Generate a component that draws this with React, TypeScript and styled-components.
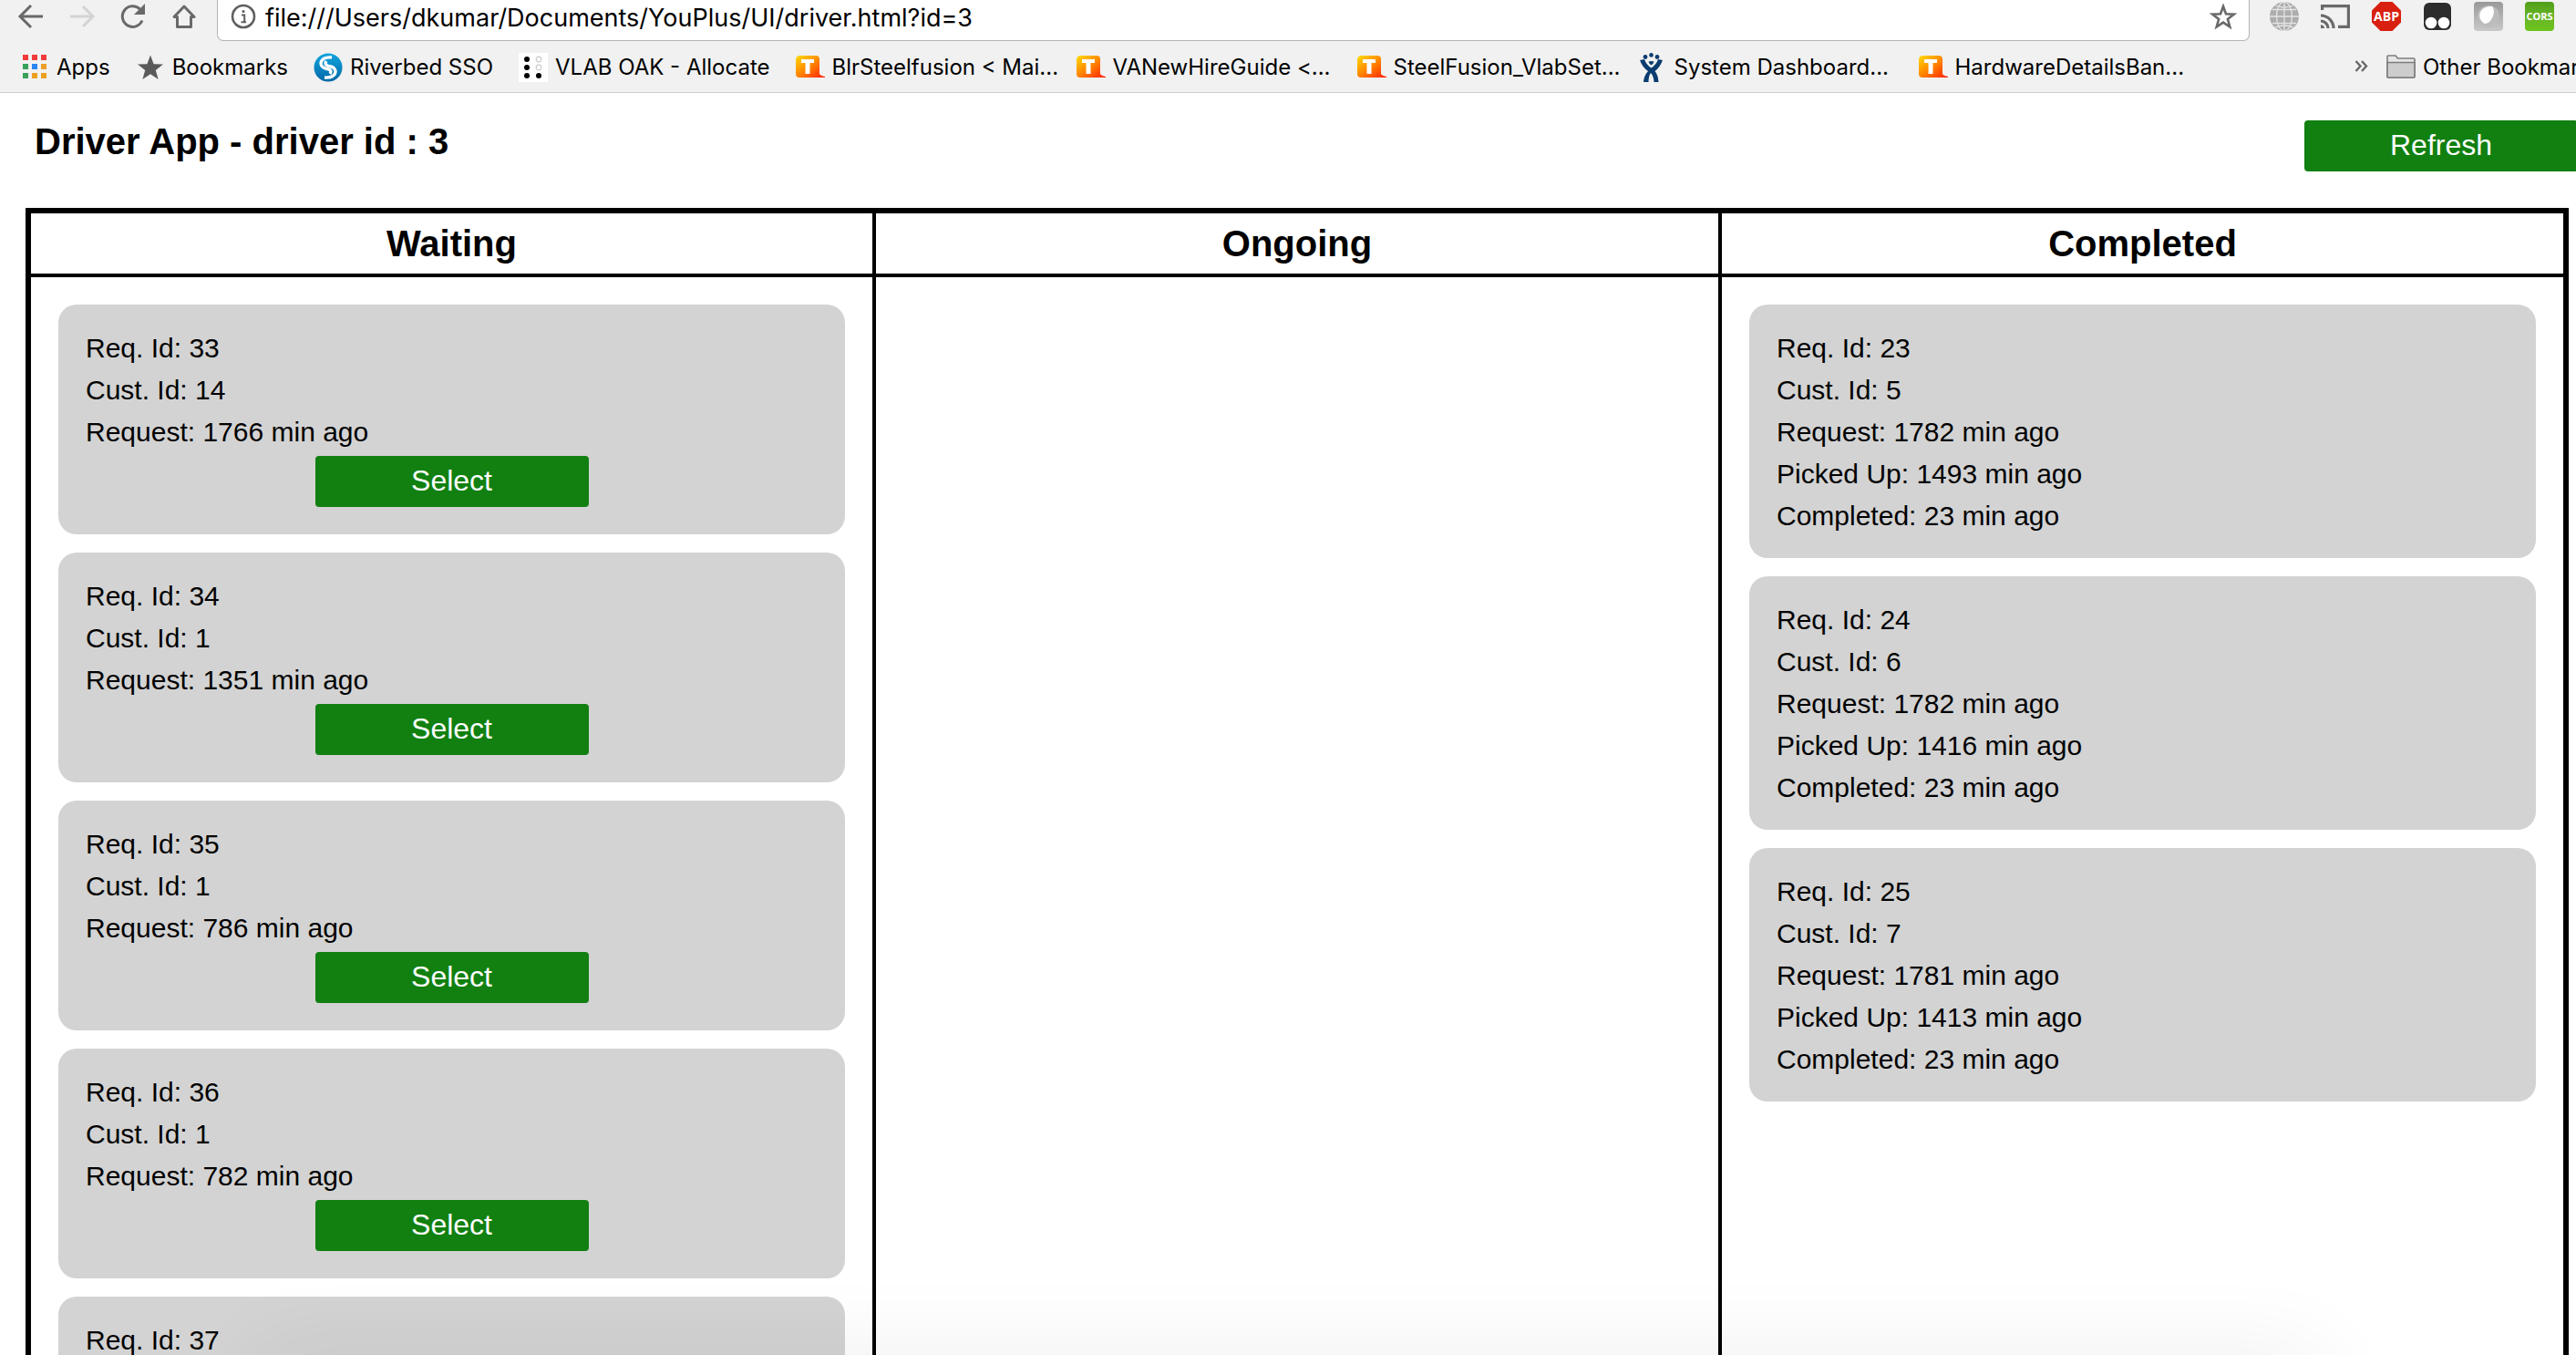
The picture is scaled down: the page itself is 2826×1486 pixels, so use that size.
import React from 'react';
import styled, { createGlobalStyle, css } from 'styled-components';

const GlobalStyle = createGlobalStyle`
  *, *::before, *::after { box-sizing: border-box; }
  body { margin: 0; background: #fff; color: #000; }
`;

const uiFont = "Inter, Roboto, sans-serif";
const pageFont = "'Liberation Sans', Arial, sans-serif";

const Window = styled.div`
  display: flex;
  flex-direction: column;
  height: 100vh;
  overflow: hidden;
`;

/* ---------- browser chrome ---------- */

const Chrome = styled.header`
  flex: none;
  background: #f1f1f1;
  border-bottom: 1px solid #cfcfcf;
  font-family: ${uiFont};
`;

const Toolbar = styled.div`
  display: flex;
  align-items: flex-start;
  height: 45px;
  padding: 0 24px 0 18px;
`;

const NavGroup = styled.nav`
  display: flex;
  align-items: center;
  gap: 24px;
  height: 36px;
  margin-right: 20px;
`;

const IconButton = styled.button`
  display: block;
  flex: none;
  width: 32px;
  height: 32px;
  padding: 0;
  border: 0;
  background: none;
`;

const AddressBar = styled.div`
  display: flex;
  flex: 1;
  align-items: center;
  height: 45px;
  padding: 0 12px 8px;
  background: #fff;
  border: 1px solid #b4b4b4;
  border-top: 0;
  border-radius: 0 0 7px 7px;
`;

const AddressInput = styled.input`
  flex: 1;
  min-width: 0;
  height: 36px;
  padding: 2px 8px 0;
  border: 0;
  outline: 0;
  background: none;
  color: #000;
  font: 27px/34px ${uiFont};
`;

const Extensions = styled.div`
  display: flex;
  align-items: center;
  gap: 24px;
  height: 36px;
  margin-left: 22px;
`;

const BookmarksBar = styled.nav`
  display: flex;
  align-items: center;
  gap: 28px;
  height: 56px;
  padding: 2px 0 0 22px;
  overflow: hidden;
`;

const Bookmark = styled.a<{ $clipped?: boolean }>`
  display: flex;
  flex: none;
  align-items: center;
  gap: 8px;
  color: #000;
  font-size: 24px;
  line-height: 32px;
  white-space: nowrap;
  text-decoration: none;
  ${p => p.$clipped && css`width: 280px;`}
`;

const Overflow = styled.div`
  display: flex;
  flex: none;
  align-items: center;
  gap: 12px;
  width: 252px;
  margin-left: auto;
`;

const Svg = styled.svg`
  display: block;
  flex: none;
  width: 32px;
  height: 32px;
`;

/* ---------- driver page ---------- */

const Page = styled.main`
  flex: 1;
  min-height: 0;
  padding-top: 30px;
  overflow: hidden;
  font-family: ${pageFont};
`;

const PageHeader = styled.div`
  display: flex;
  align-items: flex-start;
  justify-content: space-between;
  margin: 0 -2px 40px 38px;
`;

const Title = styled.h1`
  margin: 0;
  font-size: 40px;
  line-height: 46px;
`;

const ActionButton = styled.button`
  flex: none;
  width: 300px;
  height: 56px;
  padding: 0 0 2px;
  border: 0;
  border-radius: 4px;
  background: #118011;
  color: #fff;
  font: 32px/36px ${pageFont};
`;

const BoardFrame = styled.div`
  padding: 0 8px 0 28px;
`;

const Board = styled.table`
  width: 100%;
  table-layout: fixed;
  border-collapse: collapse;
  border: 6px solid #000;
`;

const ColumnTitle = styled.th`
  padding: 10px;
  border: 4px solid #000;
  font-size: 40px;
  line-height: 46px;
`;

const Column = styled.td`
  padding: 30px;
  border: 4px solid #000;
  vertical-align: top;
`;

const CardList = styled.div`
  display: grid;
  gap: 20px;
`;

const Card = styled.article`
  display: flex;
  flex-direction: column;
  align-items: center;
  gap: 10px;
  padding: 30px;
  border-radius: 20px;
  background: #d3d3d3;
`;

const Details = styled.ul`
  display: grid;
  gap: 10px;
  width: 100%;
  margin: 0 0 -2px;
  padding: 0;
  list-style: none;
  font-size: 30px;
  line-height: 36px;
`;

/* Soft shade along the lower edge of the window. */
const BottomShade = styled.div`
  position: fixed;
  left: 300px;
  right: 300px;
  bottom: -60px;
  height: 40px;
  box-shadow: 0 0 100px 20px rgba(0, 0, 0, 0.07);
  pointer-events: none;
`;

/* ---------- icons ---------- */

const GREY = '#696969';

const BackIcon = ({ color = GREY, flip = false }: { color?: string; flip?: boolean }) => (
  <Svg viewBox="0 0 32 32" fill="none" stroke={color} strokeWidth="3">
    <path d={flip ? 'M3 16H28M17 5L28 16L17 27' : 'M29 16H4M16 4L4 16L16 28'} />
  </Svg>
);

const ReloadIcon = () => (
  <Svg viewBox="0 0 32 32">
    <path d="M26 20.5A11.3 11.3 0 1 1 23.5 8" fill="none" stroke={GREY} strokeWidth="3" />
    <path d="M29 2V14H17Z" fill={GREY} />
  </Svg>
);

const HomeIcon = () => (
  <Svg viewBox="0 0 32 32" fill="none" stroke={GREY} strokeWidth="3">
    <path d="M16 5L5 16.5H8.5V27.5H23.5V16.5H27Z" strokeLinejoin="round" />
  </Svg>
);

const InfoIcon = () => (
  <Svg viewBox="0 0 32 32">
    <circle cx="16" cy="16" r="12" fill="none" stroke="#5f5f5f" strokeWidth="2.6" />
    <path d="M14 14.5H17.2V22M13.5 22.3H19" fill="none" stroke="#5f5f5f" strokeWidth="2" />
    <circle cx="16" cy="10.5" r="1.6" fill="#5f5f5f" />
  </Svg>
);

const STAR = 'M16 2.5L19.6 12.2L30 12.6L21.8 19L24.6 29L16 23.2L7.4 29L10.2 19L2 12.6L12.4 12.2Z';

const StarOutlineIcon = () => (
  <Svg viewBox="0 0 32 32">
    <path d="M16 5L19 13.3L27.8 13.6L20.9 19L23.3 27.5L16 22.6L8.7 27.5L11.1 19L4.2 13.6L13 13.3Z" fill="none" stroke={GREY} strokeWidth="2.6" />
  </Svg>
);

const GlobeIcon = () => (
  <Svg viewBox="0 0 32 32">
    <circle cx="16" cy="16" r="16" fill="#adadad" />
    <g fill="none" stroke="#e4e4e4" strokeWidth="1.3">
      <path d="M16 0V32M0 16H32M3 8.5H29M3 23.5H29" />
      <ellipse cx="16" cy="16" rx="8.5" ry="16" />
      <path d="M6 4Q16 8 26 4M6 28Q16 24 26 28" />
    </g>
  </Svg>
);

const CastIcon = () => (
  <Svg viewBox="0 0 32 32" fill="none" stroke={GREY} strokeWidth="3.2">
    <path d="M1.6 9V4.6H30.4V27.4H19" />
    <path d="M0 15A14 14 0 0 1 14 29M0 21A8 8 0 0 1 8 29" />
    <path d="M0 25.2A4 4 0 0 1 4 29H0Z" fill={GREY} stroke="none" />
  </Svg>
);

const AdBlockIcon = () => (
  <Svg viewBox="0 0 32 32">
    <path d="M9.5 0H22.5L32 9.5V22.5L22.5 32H9.5L0 22.5V9.5Z" fill="#d92010" />
    <text x="16" y="21" textAnchor="middle" fill="#fff" fontFamily="'Open Sans', sans-serif" fontWeight="700" fontSize="14">ABP</text>
  </Svg>
);

const MonkeyIcon = () => (
  <Svg viewBox="0 0 32 32">
    <rect x="0.5" y="0.5" width="31" height="31" rx="7" fill="#fff" />
    <rect x="1" y="1" width="30" height="30" rx="6" fill="#2c2c2c" />
    <circle cx="9" cy="23" r="6.3" fill="#fff" />
    <circle cx="23" cy="23" r="6.3" fill="#fff" />
  </Svg>
);

const BubbleIcon = () => (
  <Svg viewBox="0 0 32 32">
    <defs>
      <linearGradient id="bubble" x2="0" y2="1">
        <stop offset="0" stopColor="#999" /><stop offset="1" stopColor="#c9c9c9" />
      </linearGradient>
    </defs>
    <rect width="32" height="32" rx="4" fill="url(#bubble)" />
    <circle cx="16" cy="16" r="12" fill="#bcbcbc" />
    <path d="M20 5C25 11 19 24 12 24C3 20 4 4 20 5Z" fill="#fff" />
  </Svg>
);

const CorsIcon = () => (
  <Svg viewBox="0 0 32 32">
    <defs>
      <linearGradient id="cors" x2="0" y2="1">
        <stop offset="0" stopColor="#4f9f18" /><stop offset="0.5" stopColor="#69b428" /><stop offset="1" stopColor="#6cc41c" />
      </linearGradient>
    </defs>
    <rect width="32" height="32" rx="4" fill="url(#cors)" />
    <text x="16" y="20" textAnchor="middle" fill="#fff" fontFamily="'Open Sans', sans-serif" fontWeight="700" fontSize="11">CORS</text>
  </Svg>
);

const AppsIcon = () => {
  const colors = ['#f23a3a', '#f23a3a', '#f23a3a', '#3aa05a', '#2a86f0', '#eda024', '#3aa05a', '#eda024', '#eda024'];
  return (
    <Svg viewBox="0 0 32 32">
      {colors.map((c, i) => (
        <rect key={i} x={3 + (i % 3) * 10} y={2 + Math.floor(i / 3) * 10} width="6" height="6" fill={c} />
      ))}
    </Svg>
  );
};

const StarIcon = () => <Svg viewBox="0 0 32 32"><path d={STAR} fill="#5a5a5a" /></Svg>;

const RiverbedIcon = () => (
  <Svg viewBox="0 0 32 32">
    <defs>
      <linearGradient id="riverbed" x2="0" y2="1">
        <stop offset="0" stopColor="#12a5de" /><stop offset="1" stopColor="#0068a8" />
      </linearGradient>
    </defs>
    <circle cx="16" cy="16" r="15.5" fill="url(#riverbed)" />
    <path d="M20 5C6 4 5 15 13 17C19 18 20 20 18 23" fill="none" stroke="#fff" strokeWidth="3.4" />
    <path d="M12 27C26 28 27 17 19 15C13 14 12 12 14 9" fill="none" stroke="#fff" strokeWidth="3.4" />
  </Svg>
);

const DotsIcon = () => (
  <Svg viewBox="0 0 32 32">
    <rect width="32" height="32" fill="#fff" />
    {[7, 16, 25].map(y => <circle key={y} cx="9" cy={y} r="3" />)}
    <circle cx="22" cy="25" r="3" />
    {[7, 16].map(y => <circle key={y} cx="22" cy={y} r="2.8" fill="none" stroke="#ccc" strokeWidth="1.2" />)}
  </Svg>
);

const TwikiIcon = () => (
  <Svg viewBox="0 0 32 32">
    <defs>
      <linearGradient id="twiki" x2="1" y2="1">
        <stop offset="0" stopColor="#ffdc00" /><stop offset="0.5" stopColor="#ff8200" /><stop offset="1" stopColor="#ff1e00" />
      </linearGradient>
    </defs>
    <path d="M5 3H22Q26 3 26 7V23Q27 25 32 26V27H4Q0 27 0 23V8Q0 3 5 3Z" fill="url(#twiki)" />
    <path d="M6 7H20V11H15.5V23H10.5V11H6Z" fill="#fff" />
  </Svg>
);

const JiraIcon = () => (
  <Svg viewBox="0 0 32 32" fill="#0b3c70">
    <circle cx="8" cy="4.5" r="2.4" /><circle cx="14.5" cy="2.4" r="2.3" /><circle cx="21" cy="4.5" r="2.4" />
    <path d="M2 8L7 7Q9 13 14.5 16.5Q20 13 22 7L27 8Q24 16 18.5 20Q22 24 22.5 32H17.5Q17 25 14 22Q11.5 25 11.5 32H6Q6.5 25 11 20Q5 16 2 8Z" />
    <path d="M11.5 9.5Q14.5 8.5 17.5 9.5Q17 12 14.5 13.5Q12 12 11.5 9.5Z" />
  </Svg>
);

const ChevronsIcon = () => (
  <Svg viewBox="0 0 32 32" fill="none" stroke={GREY} strokeWidth="2.4">
    <path d="M10.5 9L15.5 14.5L10.5 20M17 9L22 14.5L17 20" />
  </Svg>
);

const FolderIcon = () => (
  <Svg viewBox="0 0 32 32" stroke="#7d7d7d" strokeWidth="1.6">
    <path d="M1 26V4Q1 3 2 3H10L12.5 6H30Q31 6 31 7V26Q31 27 30 27H2Q1 27 1 26Z" fill="#e6e6e6" />
    <path d="M1 10.5H31V26Q31 27 30 27H2Q1 27 1 26Z" fill="#cdcdcd" />
  </Svg>
);

/* ---------- data ---------- */

const bookmarks = [
  { label: 'Apps', Icon: AppsIcon },
  { label: 'Bookmarks', Icon: StarIcon },
  { label: 'Riverbed SSO', Icon: RiverbedIcon },
  { label: 'VLAB OAK - Allocate', Icon: DotsIcon },
  { label: 'BlrSteelfusion < Mai...', Icon: TwikiIcon, clipped: true },
  { label: 'VANewHireGuide <...', Icon: TwikiIcon, clipped: true },
  { label: 'SteelFusion_VlabSet...', Icon: TwikiIcon, clipped: true },
  { label: 'System Dashboard...', Icon: JiraIcon, clipped: true },
  { label: 'HardwareDetailsBan...', Icon: TwikiIcon, clipped: true },
];

const extensions = [
  { name: 'Globe', Icon: GlobeIcon },
  { name: 'Cast', Icon: CastIcon },
  { name: 'ABP', Icon: AdBlockIcon },
  { name: 'Scripts', Icon: MonkeyIcon },
  { name: 'Bubble', Icon: BubbleIcon },
  { name: 'CORS', Icon: CorsIcon },
];

const waiting = [
  ['Req. Id: 33', 'Cust. Id: 14', 'Request: 1766 min ago'],
  ['Req. Id: 34', 'Cust. Id: 1', 'Request: 1351 min ago'],
  ['Req. Id: 35', 'Cust. Id: 1', 'Request: 786 min ago'],
  ['Req. Id: 36', 'Cust. Id: 1', 'Request: 782 min ago'],
  ['Req. Id: 37'],
];

const completed = [
  ['Req. Id: 23', 'Cust. Id: 5', 'Request: 1782 min ago', 'Picked Up: 1493 min ago', 'Completed: 23 min ago'],
  ['Req. Id: 24', 'Cust. Id: 6', 'Request: 1782 min ago', 'Picked Up: 1416 min ago', 'Completed: 23 min ago'],
  ['Req. Id: 25', 'Cust. Id: 7', 'Request: 1781 min ago', 'Picked Up: 1413 min ago', 'Completed: 23 min ago'],
];

const Requests = ({ items, selectable }: { items: string[][]; selectable?: boolean }) => (
  <CardList>
    {items.map(lines => (
      <Card key={lines[0]}>
        <Details>{lines.map(line => <li key={line}>{line}</li>)}</Details>
        {selectable && lines.length > 1 && <ActionButton type="button">Select</ActionButton>}
      </Card>
    ))}
  </CardList>
);

export default function App() {
  return (
    <Window>
      <GlobalStyle />
      <Chrome>
        <Toolbar>
          <NavGroup>
            <IconButton type="button" aria-label="Back"><BackIcon /></IconButton>
            <IconButton type="button" aria-label="Forward"><BackIcon flip color="#d3d3d3" /></IconButton>
            <IconButton type="button" aria-label="Reload"><ReloadIcon /></IconButton>
            <IconButton type="button" aria-label="Home"><HomeIcon /></IconButton>
          </NavGroup>
          <AddressBar>
            <InfoIcon />
            <AddressInput
              type="text"
              aria-label="Address"
              defaultValue="file:///Users/dkumar/Documents/YouPlus/UI/driver.html?id=3"
            />
            <IconButton type="button" aria-label="Bookmark this page"><StarOutlineIcon /></IconButton>
          </AddressBar>
          <Extensions>
            {extensions.map(({ name, Icon }) => (
              <IconButton key={name} type="button" aria-label={name}><Icon /></IconButton>
            ))}
          </Extensions>
        </Toolbar>
        <BookmarksBar>
          {bookmarks.map(({ label, Icon, clipped }) => (
            <Bookmark key={label} href="#" $clipped={clipped}><Icon />{label}</Bookmark>
          ))}
          <Overflow>
            <IconButton type="button" aria-label="More bookmarks"><ChevronsIcon /></IconButton>
            <Bookmark href="#"><FolderIcon />Other Bookmarks</Bookmark>
          </Overflow>
        </BookmarksBar>
      </Chrome>
      <Page>
        <PageHeader>
          <Title>Driver App - driver id : 3</Title>
          <ActionButton type="button">Refresh</ActionButton>
        </PageHeader>
        <BoardFrame>
          <Board>
            <thead>
              <tr>
                <ColumnTitle scope="col">Waiting</ColumnTitle>
                <ColumnTitle scope="col">Ongoing</ColumnTitle>
                <ColumnTitle scope="col">Completed</ColumnTitle>
              </tr>
            </thead>
            <tbody>
              <tr>
                <Column><Requests items={waiting} selectable /></Column>
                <Column />
                <Column><Requests items={completed} /></Column>
              </tr>
            </tbody>
          </Board>
        </BoardFrame>
      </Page>
      <BottomShade />
    </Window>
  );
}
